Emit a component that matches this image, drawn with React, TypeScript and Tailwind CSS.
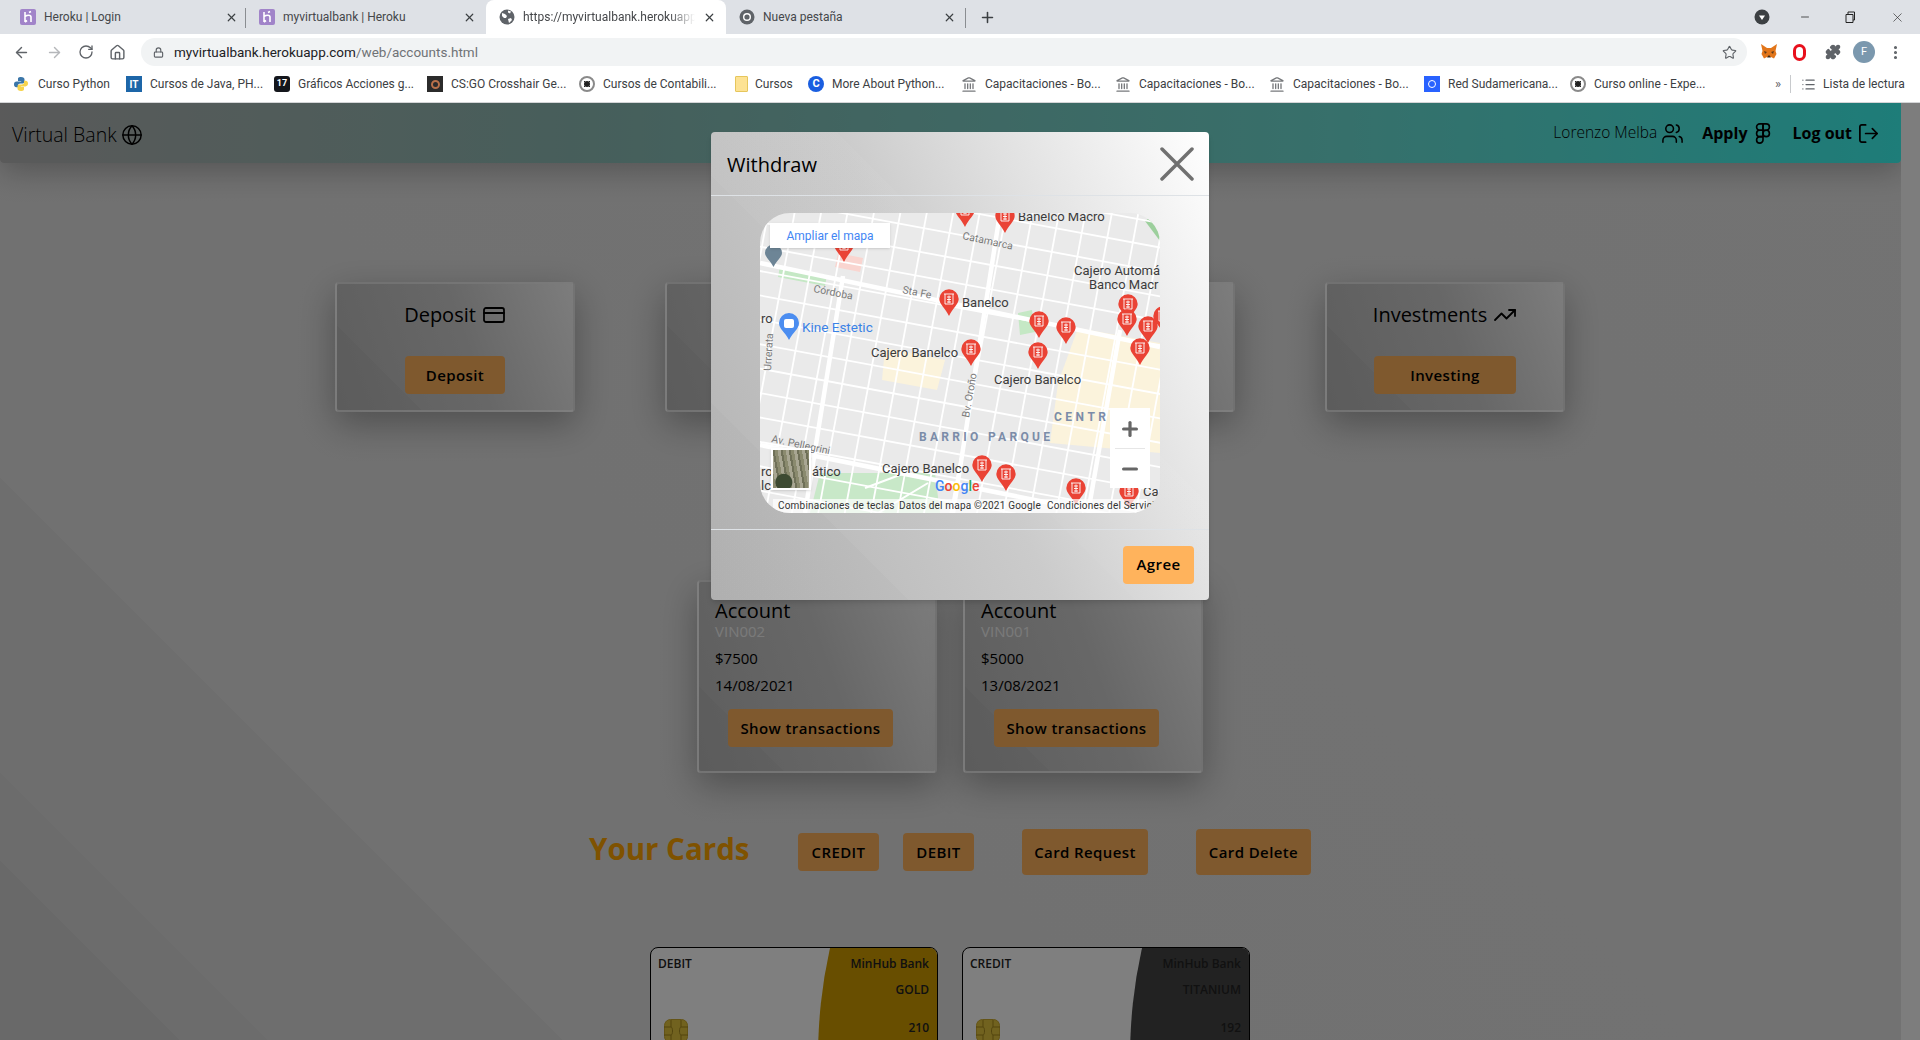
import React from 'react';
import {
  ArrowLeft,
  ArrowRight,
  CreditCard,
  Figma,
  Globe,
  Home,
  Landmark,
  List,
  Lock,
  LogOut,
  Minus,
  MoreVertical,
  Plus,
  Puzzle,
  RotateCw,
  Star,
  TrendingUp,
  Users,
  X,
} from 'lucide-react';

const chromeFont = "[font-family:Roboto,'Liberation_Sans',sans-serif]";

function HerokuIcon() {
  return (
    <svg width="16" height="16" viewBox="0 0 16 16" className="shrink-0">
      <rect width="16" height="16" rx="2" fill="#a184c9" />
      <path d="M5 3v10M5 7.5c2-1.5 6-2 6 .5v5M9 3.5L11 2.5M5 13l2-1.5" stroke="#fff" strokeWidth="1.6" fill="none" />
    </svg>
  );
}

function GlobeFavicon() {
  return (
    <svg width="16" height="16" viewBox="0 0 16 16" className="shrink-0">
      <circle cx="8" cy="8" r="7.5" fill="#5f6368" />
      <path d="M3 4l3 1 2 2-1 2-2 0-2-2zM9 10l3-1 1 2-3 3zM9 1.5l3 1-1 2-2-1z" fill="#fff" />
    </svg>
  );
}

function ChromeFavicon() {
  return (
    <svg width="16" height="16" viewBox="0 0 16 16" className="shrink-0">
      <circle cx="8" cy="8" r="7.5" fill="#5f6368" />
      <circle cx="8" cy="8" r="4" fill="#fff" />
      <circle cx="8" cy="8" r="2.6" fill="#5f6368" />
    </svg>
  );
}

function Tab({
  icon,
  title,
  active,
  fade,
  divider,
}: {
  icon: React.ReactNode;
  title: string;
  active?: boolean;
  fade?: boolean;
  divider?: boolean;
}) {
  return (
    <div
      className={`relative flex w-[240px] h-[34px] shrink-0 items-center pl-[13px] pr-[10px] gap-[8px] ${
        active ? 'bg-white rounded-t-lg' : ''
      }`}
    >
      {icon}
      <span
        className={`flex-1 overflow-hidden whitespace-nowrap text-[12px] text-[#45474a] ${
          fade ? '[mask-image:linear-gradient(90deg,black_85%,transparent)]' : ''
        }`}
      >
        {title}
      </span>
      <X size={13} strokeWidth={2.2} className="shrink-0 text-[#3c4043]" />
      {divider && <div className="absolute right-0 top-[8px] h-[20px] w-px bg-[#8a8d91]" />}
    </div>
  );
}

function PythonIcon() {
  return (
    <svg width="16" height="16" viewBox="0 0 16 16">
      <path d="M8 1C5 1 5 2 5 3.5V5h3.2v.6H3.5C2 5.6 1 6.6 1 8.4s1 2.8 2.3 2.8H5V9.4c0-1.2 1-2 2.2-2h2.6c1 0 1.7-.8 1.7-1.8V3.4C11.500 2 10.500 1 8 1z" fill="#3b76a8" />
      <path d="M8 15c3 0 3-1 3-2.500V11H7.800v-.6h4.700c1.500 0 2.500-1 2.500-2.800s-1-2.800-2.300-2.800H11v1.800c0 1.200-1 2-2.200 2H6.200c-1 0-1.700.8-1.700 1.800v2.200C4.500 14 5.500 15 8 15z" fill="#f7d44c" />
    </svg>
  );
}

function RingIcon() {
  return (
    <svg width="16" height="16" viewBox="0 0 16 16">
      <circle cx="8" cy="8" r="7" fill="#fff" stroke="#8a8a8a" strokeWidth="2" />
      <circle cx="8" cy="8" r="3" fill="#222" />
      <path d="M5 5l6 6M11 5l-6 6" stroke="#222" strokeWidth="1" />
    </svg>
  );
}

const bookmarks: { label: string; width: string; gap: string; icon: React.ReactNode }[] = [
  { label: 'Curso Python', width: 'w-[113px]', gap: 'gap-[9px]', icon: <PythonIcon /> },
  {
    label: 'Cursos de Java, PH...',
    width: 'w-[148px]',
    gap: 'gap-[8px]',
    icon: (
      <span className="flex h-[16px] w-[16px] items-center justify-center bg-[#1d66a8] text-[10px] font-bold text-white">
        IT
      </span>
    ),
  },
  {
    label: 'Gráficos Acciones g...',
    width: 'w-[153px]',
    gap: 'gap-[8px]',
    icon: (
      <span className="flex h-[16px] w-[16px] items-center justify-center rounded-[3px] bg-[#14161c] text-[9px] font-bold text-white">
        17
      </span>
    ),
  },
  {
    label: 'CS:GO Crosshair Ge...',
    width: 'w-[152px]',
    gap: 'gap-[8px]',
    icon: (
      <span className="flex h-[16px] w-[16px] items-center justify-center bg-[#2b2b2b]">
        <span className="h-[9px] w-[9px] rounded-full border-2 border-[#b9714a]" />
      </span>
    ),
  },
  { label: 'Cursos de Contabili...', width: 'w-[154px]', gap: 'gap-[8px]', icon: <RingIcon /> },
  {
    label: 'Cursos',
    width: 'w-[75px]',
    gap: 'gap-[6px]',
    icon: <span className="h-[16px] w-[13px] rounded-[1px] border border-[#e6c65c] bg-[#fde293]" />,
  },
  {
    label: 'More About Python...',
    width: 'w-[153px]',
    gap: 'gap-[8px]',
    icon: (
      <span className="flex h-[16px] w-[16px] items-center justify-center rounded-full bg-[#1a5ee0] text-[11px] font-bold text-white">
        C
      </span>
    ),
  },
  {
    label: 'Capacitaciones - Bo...',
    width: 'w-[154px]',
    gap: 'gap-[8px]',
    icon: <Landmark size={17} className="text-[#77797c]" />,
  },
  {
    label: 'Capacitaciones - Bo...',
    width: 'w-[154px]',
    gap: 'gap-[8px]',
    icon: <Landmark size={17} className="text-[#77797c]" />,
  },
  {
    label: 'Capacitaciones - Bo...',
    width: 'w-[155px]',
    gap: 'gap-[8px]',
    icon: <Landmark size={17} className="text-[#77797c]" />,
  },
  {
    label: 'Red Sudamericana...',
    width: 'w-[146px]',
    gap: 'gap-[8px]',
    icon: (
      <span className="flex h-[16px] w-[16px] items-center justify-center bg-[#2962ff]">
        <span className="h-[8px] w-[8px] rounded-full border border-white" />
      </span>
    ),
  },
  { label: 'Curso online - Expe...', width: 'w-[205px]', gap: 'gap-[8px]', icon: <RingIcon /> },
];

function BrowserChrome() {
  return (
    <div className={`shrink-0 ${chromeFont}`}>
      <div className="flex h-[34px] items-center bg-[#dee1e6]">
        <div className="flex w-[246px] shrink-0">
          <div className="relative flex h-[34px] w-full items-center pl-[20px] pr-[8px] gap-[8px]">
            <HerokuIcon />
            <span className="flex-1 whitespace-nowrap text-[12px] text-[#45474a]">Heroku | Login</span>
            <X size={13} strokeWidth={2.2} className="text-[#3c4043]" />
            <div className="absolute right-0 top-[8px] h-[20px] w-px bg-[#8a8d91]" />
          </div>
        </div>
        <Tab icon={<HerokuIcon />} title="myvirtualbank | Heroku" />
        <Tab
          icon={<GlobeFavicon />}
          title="https://myvirtualbank.herokuapp.com/web/accounts.html"
          active
          fade
        />
        <Tab icon={<ChromeFavicon />} title="Nueva pestaña" divider />
        <Plus size={17} strokeWidth={2.2} className="ml-[13px] text-[#3c4043]" />
        <div className="ml-auto flex items-center">
          <svg width="16" height="16" viewBox="0 0 16 16" className="mr-[29px]">
            <circle cx="8" cy="8" r="7.500" fill="#3c4043" />
            <path d="M5 6.500h6L8 11z" fill="#fff" />
          </svg>
          <Minus size={12} strokeWidth={1.5} className="mr-[33px] text-[#222]" />
          <svg width="12" height="12" viewBox="0 0 12 12" className="mr-[34px]">
            <path d="M2 3.500h7v8H2zM4 3.500V1h6.500v8H9" stroke="#222" fill="none" />
          </svg>
          <X size={15} strokeWidth={1} className="mr-[15px] text-[#222]" />
        </div>
      </div>
      <div className="flex h-[36px] items-center bg-white">
        <ArrowLeft size={17} strokeWidth={2} className="ml-[13px] text-[#5f6368]" />
        <ArrowRight size={17} strokeWidth={2} className="ml-[16px] text-[#b5b7ba]" />
        <RotateCw size={16} strokeWidth={2} className="ml-[15px] text-[#5f6368]" />
        <Home size={17} strokeWidth={2} className="ml-[15px] text-[#5f6368]" />
        <div className="ml-[15px] flex h-[28px] w-[1606px] items-center rounded-full bg-[#f1f3f4] pl-[12px] pr-[10px]">
          <Lock size={11} strokeWidth={2.5} className="text-[#5f6368]" />
          <span className="ml-[10px] text-[13.5px] text-[#202124]">myvirtualbank.herokuapp.com</span>
          <span className="text-[13.5px] text-[#6f7276]">/web/accounts.html</span>
          <Star size={15} strokeWidth={1.8} className="ml-auto text-[#5f6368]" />
        </div>
        <svg width="18" height="18" viewBox="0 0 18 18" className="ml-[13px]">
          <path d="M1 1l6 4h4l6-4-1.500 7 1 3-2.500 4.500-3-1.500H7l-3 1.500L1.500 11l1-3z" fill="#e2761b" />
          <path d="M7 14.500h4L9 12z" fill="#3b2a1a" />
          <path d="M4 8l3 1-2 2zM14 8l-3 1 2 2z" fill="#5a3a1c" />
        </svg>
        <span className="ml-[15px] h-[17px] w-[13px] rounded-full border-[3.500px] border-[#e8101c]" />
        <Puzzle size={16} className="ml-[19px] fill-[#5f6368] text-[#5f6368]" />
        <span className="ml-[12px] flex h-[22px] w-[22px] items-center justify-center rounded-full bg-[#7b98ae] text-[11px] text-white">
          F
        </span>
        <MoreVertical size={17} strokeWidth={2.4} className="ml-[12px] text-[#5f6368]" />
      </div>
      <div className="flex h-[33px] items-center border-b border-[#d4d5d7] bg-white pb-[4px] pl-[13px]">
        {bookmarks.map((b, i) => (
          <div key={i} className={`flex shrink-0 items-center ${b.width} ${b.gap}`}>
            <span className="flex w-[16px] shrink-0 justify-center">{b.icon}</span>
            <span className="whitespace-nowrap text-[12px] text-[#3c4043]">{b.label}</span>
          </div>
        ))}
        <span className="text-[13px] text-[#5f6368]">»</span>
        <div className="ml-[9px] h-[18px] w-px bg-[#c8cacd]" />
        <List size={15} className="ml-[10px] text-[#5f6368]" />
        <span className="ml-[7px] whitespace-nowrap text-[12px] text-[#3c4043]">Lista de lectura</span>
      </div>
    </div>
  );
}

function OrangeButton({
  children,
  className,
}: {
  children: React.ReactNode;
  className: string;
}) {
  return (
    <button
      className={`flex items-center justify-center rounded bg-[#ffb35c] text-[15px] font-semibold tracking-[0.4px] text-black ${className}`}
    >
      {children}
    </button>
  );
}

const glass =
  'rounded border-2 border-white/60 bg-[linear-gradient(45deg,rgba(0,0,0,0.025)_0,rgba(0,0,0,0.025)_60px,transparent_60px),linear-gradient(70deg,#bcbcbc_0%,#cfcfcf_55%,#fafafa_100%)] shadow-[0_12px_36px_rgba(0,0,0,0.3)]';

function ActionCard({
  title,
  icon,
  action,
  btnWidth,
}: {
  title: string;
  icon: React.ReactNode;
  action: string;
  btnWidth: string;
}) {
  return (
    <div className={`flex h-[130px] w-[240px] flex-col items-center pt-[17px] ${glass}`}>
      <div className="flex h-[28px] items-center gap-[6px] text-[20px] text-black">
        {title}
        {icon}
      </div>
      <OrangeButton className={`mt-[27px] h-[38px] ${btnWidth}`}>{action}</OrangeButton>
    </div>
  );
}

function AccountCard({ vin, amount, date }: { vin: string; amount: string; date: string }) {
  return (
    <div className={`flex h-[193px] w-[240px] flex-col pl-[16px] pt-[17px] ${glass}`}>
      <div className="h-[22px] text-[20px] leading-[24px] text-black">Account</div>
      <div className="h-[20px] text-[15px] leading-[20px] text-[#f5f5f5]">{vin}</div>
      <div className="mt-[7px] h-[20px] text-[15px] leading-[20px] text-black">{amount}</div>
      <div className="mt-[7px] h-[20px] text-[15px] leading-[20px] text-black">{date}</div>
      <OrangeButton className="ml-[13px] mt-[14px] h-[38px] w-[165px]">Show transactions</OrangeButton>
    </div>
  );
}

function BankCard({
  type,
  tier,
  code,
  color,
  tierColor,
}: {
  type: string;
  tier: string;
  code: string;
  color: string;
  tierColor: string;
}) {
  return (
    <div className="relative h-[180px] w-[288px] overflow-hidden rounded-lg border border-black bg-white text-[12px] font-semibold">
      <div className={`absolute left-[167px] top-[-170px] h-[560px] w-[300px] rounded-[50%] ${color}`} />
      <div className="relative flex items-start justify-between px-[6px] pt-[7px] leading-[18px]">
        <span className="pl-px text-[#222]">{type}</span>
        <span className={`pr-[2px] ${tierColor}`}>MinHub Bank</span>
      </div>
      <div className={`relative mt-[8px] pr-[8px] text-right leading-[18px] ${tierColor}`}>{tier}</div>
      <div className={`relative mt-[20px] pr-[8px] text-right leading-[18px] ${tierColor}`}>{code}</div>
      <svg width="24" height="24" viewBox="0 0 24 24" className="absolute left-[13px] top-[71px]">
        <rect x="0.500" y="0.500" width="23" height="23" rx="6" fill="#e2c43e" stroke="#c9a92e" />
        <path d="M0 8h7c2 0 2 8 0 8H0M24 8h-7c-2 0-2 8 0 8h7M7 1v7M17 1v7M7 16v7M17 16v7" stroke="#a68a1d" fill="none" />
      </svg>
    </div>
  );
}

function MapPin({ x, y }: { x: number; y: number }) {
  return (
    <g transform={`translate(${x} ${y})`}>
      <path d="M-9.700 0a9.700 9.700 0 0 1 19.400 0c0 5-6 9-9.700 17C-3.700 9-9.700 5-9.700 0z" fill="#ea4335" />
      <path d="M-5-5H5M-4-5V5H4V-5M-2-2H2M-2 .500H2M-2 3H2M0-3.500V4" stroke="#fff" strokeWidth="0.900" fill="none" />
    </g>
  );
}

const pins = [
  [245, 3], [205, -3], [84, 32], [189, 86], [279, 108], [306, 114], [278, 139], [211, 136],
  [368, 91], [367, 106], [403, 103], [388, 113], [380, 135], [222, 252], [246, 261], [316, 275], [369, 278],
];

const mapLabels: { x: number; y: number; text: string }[] = [
  { x: 258, y: 8, text: 'Banelco Macro' },
  { x: 314, y: 62, text: 'Cajero Automá' },
  { x: 329, y: 76, text: 'Banco Macr' },
  { x: 202, y: 94, text: 'Banelco' },
  { x: 1, y: 110, text: 'ro' },
  { x: 111, y: 144, text: 'Cajero Banelco' },
  { x: 234, y: 171, text: 'Cajero Banelco' },
  { x: 122, y: 260, text: 'Cajero Banelco' },
  { x: 52, y: 263, text: 'ático' },
  { x: 1, y: 263, text: 'ro' },
  { x: 1, y: 277, text: 'lc' },
  { x: 383, y: 283, text: 'Ca' },
];

function MapView() {
  const hLines = Array.from({ length: 26 }, (_, i) => -120 + i * 24);
  const vLines = Array.from({ length: 28 }, (_, i) => -120 + i * 26);
  return (
    <div className="relative h-[300px] w-[400px] overflow-hidden rounded-[30px] bg-[#eaeaea] [font-family:Roboto,sans-serif]">
      <svg width="400" height="300" viewBox="0 0 400 300" className="absolute inset-0">
        <path d="M318 115l82 15v110l-110-10 8-60z" fill="#fbf3dc" />
        <path d="M125 135l60 12-8 30-55-10z" fill="#fbf3dc" />
        <path d="M20 53l47 9-2 11-47-9z" fill="#c5e8c5" />
        <path d="M258 100l14-3 3 22-15 3z" fill="#c5e8c5" />
        <path d="M60 260l115 0 5 40H50z" fill="#c8e8c8" />
        <path d="M78 40l25 5-3 14-25-5z" fill="#f9d5d0" />
        <path d="M385 8l15 20v-30z" fill="#9ccf9c" />
        <g transform="rotate(10.500 200 150)" stroke="#fff" strokeWidth="1.800">
          {hLines.map((y) => (
            <line key={y} x1="-140" x2="560" y1={y} y2={y} />
          ))}
          {vLines.map((x) => (
            <line key={x} x1={x} x2={x} y1="-140" y2="460" />
          ))}
        </g>
        <g stroke="#fff" strokeWidth="4.500" fill="none">
          <path d="M240 0l-47 300M83 63L45 300M360 117l-32 183M0 50l400 84M0 232l400 80" />
        </g>
        <path d="M105 275l40-15M118 300l50-30" stroke="#fff" strokeWidth="2" fill="none" />
        <g fontSize="10.500" fill="#7a7a7a">
          <text x="202" y="26" transform="rotate(12 202 26)">Catamarca</text>
          <text x="53" y="79" transform="rotate(11 53 79)">Córdoba</text>
          <text x="142" y="80" transform="rotate(11 142 80)">Sta Fe</text>
          <text x="209" y="205" transform="rotate(-80 209 205)">Bv. Oroño</text>
          <text x="11" y="158" transform="rotate(-87 11 158)">Urrerata</text>
          <text x="11" y="229" transform="rotate(12 11 229)">Av. Pellegrini</text>
        </g>
        {pins.map(([x, y]) => (
          <MapPin key={`${x}-${y}`} x={x} y={y} />
        ))}
        <path d="M5 40a8.500 8.500 0 0 1 17 0c0 4-5 7-8.500 14C10 47 5 44 5 40z" fill="#6d8596" />
        <path d="M19 110a10 10 0 0 1 20 0c0 6-6 9-10 17C25 119 19 116 19 110z" fill="#4b8df0" />
        <rect x="24" y="106" width="10" height="9" rx="2" fill="#fff" />
        <g fontSize="13" fill="#3c3c3c">
          {mapLabels.map((l) => (
            <text key={`${l.x}-${l.y}`} x={l.x} y={l.y}>
              {l.text}
            </text>
          ))}
        </g>
        <text x="42" y="119" fontSize="13.500" fill="#3b82e6">Kine Estetic</text>
        <g fontSize="12" fontWeight="700" fill="#7b8ca8">
          <text x="294" y="208" letterSpacing="3.500">CENTR</text>
          <text x="159" y="228" letterSpacing="3.300">BARRIO PARQUE</text>
        </g>
        <text x="175" y="278" fontSize="14" fontWeight="500">
          <tspan fill="#4285f4">G</tspan>
          <tspan fill="#ea4335">o</tspan>
          <tspan fill="#fbbc05">o</tspan>
          <tspan fill="#4285f4">g</tspan>
          <tspan fill="#34a853">l</tspan>
          <tspan fill="#ea4335">e</tspan>
        </text>
        <rect x="13" y="286" width="374" height="14" fill="#fff" fillOpacity="0.7" />
        <g fontSize="10" fill="#333" letterSpacing="0.200">
          <text x="18" y="296">Combinaciones de teclas</text>
          <text x="139" y="296">Datos del mapa ©2021 Google</text>
          <text x="287" y="296">Condiciones del Servicio</text>
        </g>
      </svg>
      <div className="absolute left-[10px] top-[10px] flex h-[25px] w-[120px] items-center justify-center bg-white text-[12px] text-[#4285f4] shadow-sm">
        Ampliar el mapa
      </div>
      <div className="absolute left-[11px] top-[235px] h-[42px] w-[40px] border-2 border-white bg-[radial-gradient(circle_at_30%_85%,#3d4a32_0,#3d4a32_8px,transparent_9px),repeating-linear-gradient(80deg,#8a8a6e_0_3px,#a8a692_3px_6px,#6f7058_6px_8px)] shadow-sm" />
      <div className="absolute left-[350px] top-[195px] flex h-[80px] w-[40px] flex-col items-center bg-white">
        <Plus size={22} strokeWidth={3.500} className="mt-[10px] text-[#666]" />
        <div className="mt-[8px] h-px w-[30px] bg-[#e6e6e6]" />
        <Minus size={22} strokeWidth={3.500} className="mt-[9px] text-[#666]" />
      </div>
    </div>
  );
}

function WithdrawModal() {
  return (
    <div className="absolute left-[711px] top-[29px] flex h-[468px] w-[498px] flex-col rounded bg-[linear-gradient(45deg,rgba(0,0,0,0.015)_0,rgba(0,0,0,0.015)_140px,transparent_140px,transparent_300px,rgba(255,255,255,0.03)_300px,rgba(255,255,255,0.03)_420px,transparent_420px),linear-gradient(65deg,#b2b2b2_0%,#cbcbcb_48%,#ffffff_100%)] shadow-md">
      <div className="flex h-[64px] shrink-0 items-center justify-between border-b border-[#dee2e6] px-[15px]">
        <h5 className="pl-px pt-[3px] text-[20px] text-black">Withdraw</h5>
        <svg width="34" height="34" viewBox="0 0 34 34">
          <path d="M2 2l30 30M32 2L2 32" stroke="#707070" strokeWidth="3.500" strokeLinecap="round" />
        </svg>
      </div>
      <div className="flex flex-1 justify-center pt-[17px]">
        <MapView />
      </div>
      <div className="flex h-[71px] shrink-0 items-center justify-end border-t border-[#dee2e6] pb-[1px] pr-[15px]">
        <OrangeButton className="h-[38px] w-[71px]">Agree</OrangeButton>
      </div>
    </div>
  );
}

export default function App() {
  return (
    <div className="flex h-[1040px] w-[1920px] flex-col overflow-hidden [font-family:'Open_Sans',sans-serif]">
      <BrowserChrome />
      <div className="relative flex min-h-0 flex-1 overflow-hidden bg-[linear-gradient(45deg,#d2d2d2_0,#d2d2d2_127px,#d8d8d8_127px,#d8d8d8_189px,#dcdcdc_189px,#dcdcdc_398px,#e2e2e2_398px,#e6e6e6_100%)]">
        <div className="flex h-full w-[1901px] shrink-0 flex-col">
          <nav className="flex h-[60px] shrink-0 items-center justify-between rounded-b bg-[linear-gradient(90deg,#b4b4b4_0%,#8fbdb6_30%,#6ee0d6_70%,#3cfaf2_100%)] pl-[12px] pr-[21px] shadow-[0_8px_30px_rgba(0,0,0,0.25)]">
            <div className="flex items-center gap-[4px] pt-[4px] text-[19.5px] font-light text-black">
              Virtual Bank
              <Globe size={22} strokeWidth={1.600} />
            </div>
            <div className="flex items-center text-[15.5px] text-black">
              <span className="font-light">Lorenzo Melba</span>
              <Users size={23} strokeWidth={1.600} className="ml-[4px]" />
              <span className="ml-[18px] text-[16px] font-bold">Apply</span>
              <Figma size={22} strokeWidth={1.800} className="ml-[5px]" />
              <span className="ml-[18px] text-[16px] font-bold">Log out</span>
              <LogOut size={23} strokeWidth={1.800} className="ml-[5px] -scale-x-100 rotate-180" />
            </div>
          </nav>

          <div className="mt-[119px] flex w-[1900px] justify-center gap-[90px]">
            <ActionCard
              title="Deposit"
              icon={<CreditCard size={24} strokeWidth={1.800} />}
              action="Deposit"
              btnWidth="w-[100px]"
            />
            <ActionCard
              title="Withdraw"
              icon={<CreditCard size={24} strokeWidth={1.800} />}
              action="Withdraw"
              btnWidth="w-[100px]"
            />
            <ActionCard
              title="Transfer"
              icon={<CreditCard size={24} strokeWidth={1.800} />}
              action="Transfer"
              btnWidth="w-[100px]"
            />
            <ActionCard
              title="Investments"
              icon={<TrendingUp size={24} strokeWidth={1.800} />}
              action="Investing"
              btnWidth="w-[142px]"
            />
          </div>

          <div className="mt-[168px] flex w-[1900px] justify-center gap-[26px]">
            <AccountCard vin="VIN002" amount="$7500" date="14/08/2021" />
            <AccountCard vin="VIN001" amount="$5000" date="13/08/2021" />
          </div>

          <div className="mt-[56px] flex h-[46px] w-[1900px] items-center justify-center">
            <h2 className="mb-[6px] w-[161px] whitespace-nowrap text-[29.5px] font-bold text-[#ffa500]">Your Cards</h2>
            <OrangeButton className="ml-[48px] h-[38px] w-[81px]">CREDIT</OrangeButton>
            <OrangeButton className="ml-[24px] h-[38px] w-[71px]">DEBIT</OrangeButton>
            <OrangeButton className="ml-[48px] h-[46px] w-[126px]">Card Request</OrangeButton>
            <OrangeButton className="ml-[48px] h-[46px] w-[115px]">Card Delete</OrangeButton>
          </div>

          <div className="mt-[72px] flex w-[1900px] justify-center gap-[24px]">
            <BankCard type="DEBIT" tier="GOLD" code="210" color="bg-[#d09c00]" tierColor="text-[#222]" />
            <BankCard type="CREDIT" tier="TITANIUM" code="192" color="bg-[#454545]" tierColor="text-[#222]" />
          </div>
        </div>
        <div className="flex-1 bg-[#fafafa]" />

        {/* backdrop + modal */}
        <div className="absolute inset-0 bg-black/50" />
        <WithdrawModal />
      </div>
    </div>
  );
}
